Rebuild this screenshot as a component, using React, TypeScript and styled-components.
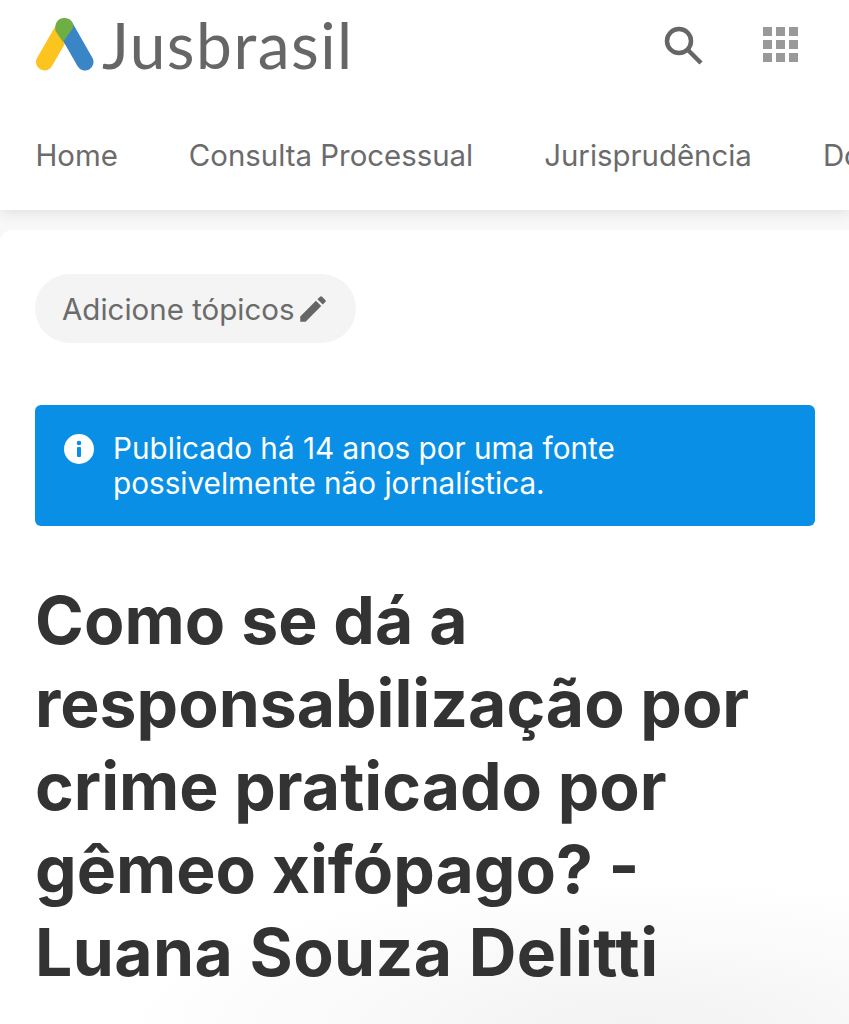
import React from 'react';
import styled, { createGlobalStyle } from 'styled-components';

const GlobalStyle = createGlobalStyle`
  html, body {
    margin: 0;
    padding: 0;
    background: #f8f8f8;
    overflow: hidden;
  }
  * {
    box-sizing: border-box;
  }
`;

const Page = styled.div`
  width: 849px;
  height: 1024px;
  overflow: hidden;
  font-family: Inter, "Liberation Sans", sans-serif;
  background: #f8f8f8;
`;

const Header = styled.header`
  position: relative;
  height: 210px;
  background: #fff;
  box-shadow: 0 2px 14px rgba(0, 0, 0, 0.11);
  display: flex;
  flex-direction: column;
`;

const TopBar = styled.div`
  height: 89px;
  padding: 0 51px 0 36px;
  display: flex;
  align-items: center;
  justify-content: space-between;
`;

const Brand = styled.div`
  display: flex;
  align-items: center;
  gap: 8px;
`;

const BrandName = styled.span`
  font-family: Lato, sans-serif;
  font-weight: 400;
  font-size: 64px;
  line-height: 1;
  letter-spacing: 1.5px;
  color: #666;
`;

const Actions = styled.div`
  display: flex;
  align-items: center;
  gap: 60px;
`;

const Nav = styled.nav`
  display: flex;
  gap: 71px;
  margin-top: 46.500px;
  padding-left: 35.500px;
  white-space: nowrap;
  font-size: 29.400px;
  line-height: 40px;
  color: #6b6b6b;
`;

const Card = styled.main`
  position: relative;
  height: 794px;
  margin-top: 20px;
  padding: 44px 34px 0 35px;
  background: radial-gradient(ellipse 520px 150px at 640px 800px, #f2f2f2 0%, #fafafa 60%, #fff 100%);
  border-radius: 12px 0 0 0;
`;

const TopicPill = styled.button`
  width: 321px;
  height: 69px;
  padding: 0 0 0 27px;
  border: none;
  border-radius: 35px;
  background: #f4f4f4;
  display: flex;
  align-items: center;
  gap: 1px;
  font-family: Inter, sans-serif;
  font-size: 29.500px;
  color: #6b6b6b;
`;

const Alert = styled.div`
  margin-top: 62px;
  height: 121px;
  padding: 26px 30px 0 29px;
  border-radius: 6px;
  background: #0a8fe6;
  color: #fff;
  display: flex;
  gap: 19px;
  font-size: 29.700px;
  line-height: 35px;
`;

const AlertIcon = styled.svg`
  flex: none;
  margin-top: 3px;
`;

const Title = styled.h1`
  margin: 53px 0 0;
  font-size: 66px;
  line-height: 83px;
  font-weight: 700;
  color: #333;
`;

const TitleLine = styled.span<{ $spacing?: number }>`
  display: block;
  letter-spacing: ${(p) => p.$spacing ?? 0}px;
`;

export default function App() {
  return (
    <Page>
      <GlobalStyle />
      <Header>
        <TopBar>
          <Brand>
            <svg width="58" height="54" viewBox="0 0 58 54">
              <path d="M27 12 L8.500 44" stroke="#fcc41e" strokeWidth="17" strokeLinecap="round" />
              <path d="M29 9 L49 44" stroke="#3a85c5" strokeWidth="17" strokeLinecap="round" />
              <path d="M19.500 13 C18 4 23 0 28 0 C34 0 38 4 37 10 L27 24 Z" fill="#6fae44" />
            </svg>
            <BrandName>Jusbrasil</BrandName>
          </Brand>
          <Actions>
            <svg width="40" height="40" viewBox="0 0 40 40" fill="none" stroke="#666" strokeWidth="4.500">
              <circle cx="16" cy="16" r="12" />
              <path d="M25 25 L38 38" />
            </svg>
            <svg width="35" height="35" viewBox="0 0 35 35" fill="#999">
              {[0, 13, 26].map((y) =>
                [0, 13, 26].map((x) => <rect key={`${x}-${y}`} x={x} y={y} width="9" height="9" />)
              )}
            </svg>
          </Actions>
        </TopBar>
        <Nav>
          <span>Home</span>
          <span>Consulta Processual</span>
          <span>Jurisprudência</span>
          <span>Doutrina</span>
        </Nav>
      </Header>
      <Card>
        <TopicPill>
          Adicione tópicos
          <svg width="34" height="34" viewBox="0 0 24 24" fill="#666">
            <path d="M3 17.250V21h3.750L17.810 9.940l-3.750-3.750L3 17.250zM20.710 7.040a1 1 0 0 0 0-1.410l-2.340-2.340a1 1 0 0 0-1.410 0l-1.830 1.830 3.750 3.750 1.830-1.830z" />
          </svg>
        </TopicPill>
        <Alert>
          <AlertIcon width="30" height="30" viewBox="0 0 30 30">
            <circle cx="15" cy="15" r="15" fill="#fff" />
            <rect x="13" y="13" width="4" height="10" rx="1" fill="#0a8fe6" />
            <circle cx="15" cy="9" r="2.300" fill="#0a8fe6" />
          </AlertIcon>
          <div>
            Publicado há 14 anos por uma fonte
            <br />
            possivelmente não jornalística.
          </div>
        </Alert>
        <Title>
          <TitleLine $spacing={0.1}>Como se dá a</TitleLine>
          <TitleLine>responsabilização por</TitleLine>
          <TitleLine>crime praticado por</TitleLine>
          <TitleLine>gêmeo xifópago? -</TitleLine>
          <TitleLine $spacing={0.45}>Luana Souza Delitti</TitleLine>
        </Title>
      </Card>
    </Page>
  );
}
